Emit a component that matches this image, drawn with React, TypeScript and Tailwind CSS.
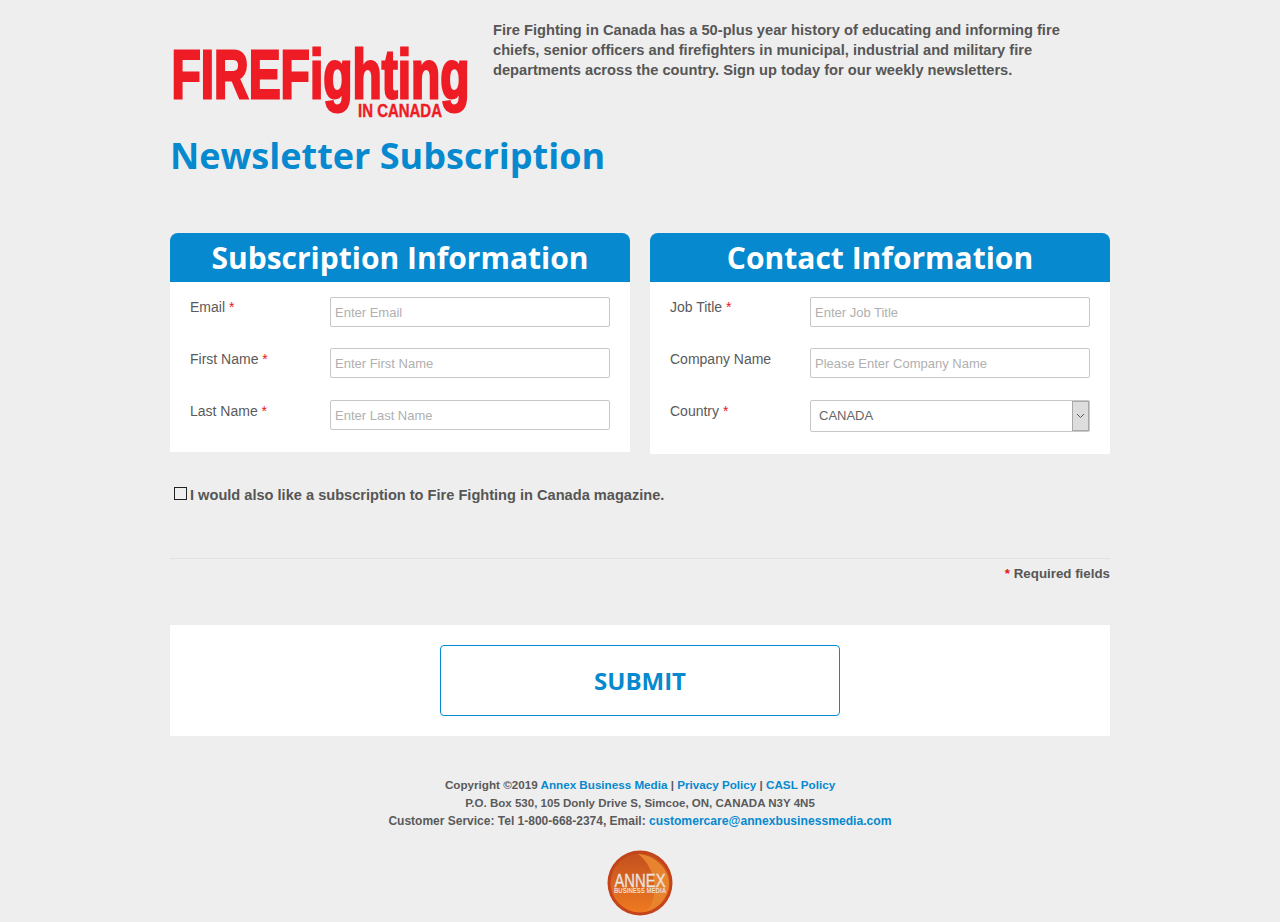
const sans = { fontFamily: '"Liberation Sans", Arial, sans-serif' }

interface FieldProps {
  label: string
  placeholder: string
  required?: boolean
  lowerLabel?: boolean
  className?: string
}

function Star() {
  return <span className="text-[#e8141c]"> *</span>
}

// label sits a little higher than the input, same as the original form
function Field({ label, placeholder, required, lowerLabel, className }: FieldProps) {
  return (
    <div className={`flex items-start ${className ?? ''}`}>
      <label className={`w-[140px] text-[14px] leading-[18px] text-[#5a5a5a] ${lowerLabel ? 'pt-[2px]' : 'pt-[1px]'}`}>
        {label}
        {required && <Star />}
      </label>
      <input
        placeholder={placeholder}
        className="h-[30px] w-[280px] rounded-[2px] border border-[#c8c8c8] bg-white px-[4px] text-[13px] text-[#555] outline-none placeholder:text-[#b0b0b0]"
      />
    </div>
  )
}

function PanelHeader({ title }: { title: string }) {
  return (
    <div
      className="h-[49px] rounded-t-[8px] bg-[#0689ce] text-center text-[30px] font-bold leading-[49px] text-white"
      style={{ fontFamily: '"Open Sans", sans-serif' }}
    >
      {title}
    </div>
  )
}

function FireLogo() {
  return (
    <svg width="300" height="76" viewBox="0 0 300 76" className="block overflow-visible">
      <text
        x="1.5"
        y="53"
        fontFamily="Liberation Sans"
        fontWeight="700"
        fontSize="69"
        fill="#ee1c25"
        stroke="#ee1c25"
        strokeWidth="2.8"
        textLength="298"
        lengthAdjust="spacingAndGlyphs"
      >
        FIREFighting
      </text>
      <text
        x="188"
        y="72"
        fontFamily="Liberation Sans"
        fontWeight="700"
        fontSize="18"
        fill="#ee1c25"
        stroke="#ee1c25"
        strokeWidth="0.4"
        textLength="84"
        lengthAdjust="spacingAndGlyphs"
      >
        IN CANADA
      </text>
    </svg>
  )
}

function AnnexLogo() {
  return (
    <svg width="66" height="66" viewBox="0 0 66 66" className="block overflow-visible">
      <defs>
        <linearGradient id="annexFill" x1="0" y1="0" x2="0" y2="1">
          <stop offset="0" stopColor="#c4501f" />
          <stop offset="1" stopColor="#ee7a20" />
        </linearGradient>
      </defs>
      <circle cx="33" cy="33" r="32.5" fill="#c4431b" />
      <circle cx="33" cy="33" r="29.5" fill="url(#annexFill)" />
      <path d="M31 4 C46 4 62 18 62 33 C62 46 52 58 40 61 C52 48 50 18 31 4 Z" fill="#e8842e" />
      <text x="33" y="36.7" textAnchor="middle" fontFamily="Liberation Sans" fontSize="18" fill="#e9e4e0" stroke="#e9e4e0" strokeWidth="0.3" textLength="51" lengthAdjust="spacingAndGlyphs">
        ANNEX
      </text>
      <text x="33" y="43" textAnchor="middle" fontFamily="Liberation Sans" fontWeight="700" fontSize="7" fill="#f2ddcc" textLength="52" lengthAdjust="spacingAndGlyphs">
        BUSINESS MEDIA
      </text>
    </svg>
  )
}

export default function App() {
  return (
    <div className="min-h-[922px] bg-[#eeeeee]" style={sans}>
      <div className="mx-auto w-[940px]">
        {/* Header */}
        <div className="flex pt-[20px]">
          <div className="w-[323px] pt-[25px]">
            <FireLogo />
          </div>
          <p className="w-[590px] text-[14.67px] font-bold leading-[20px] text-[#565656]">
            Fire Fighting in Canada has a 50-plus year history of educating and informing fire chiefs, senior officers and firefighters in municipal, industrial and military fire departments across the country. Sign up today for our weekly newsletters.
          </p>
        </div>

        <h1
          className="mt-[11px] text-[36px] font-bold leading-[48px] text-[#0689ce]"
          style={{ fontFamily: '"Open Sans", sans-serif' }}
        >
          Newsletter Subscription
        </h1>

        {/* Form panels */}
        <div className="mt-[53px] flex items-start gap-5">
          <div className="w-[460px]">
            <PanelHeader title="Subscription Information" />
            <div className="flex flex-col gap-[21px] bg-white px-5 pb-[22px] pt-[15px]">
              <Field label="Email" placeholder="Enter Email" required />
              <Field label="First Name" placeholder="Enter First Name" required lowerLabel />
              <Field label="Last Name" placeholder="Enter Last Name" required lowerLabel className="mt-[1px]" />
            </div>
          </div>
          <div className="w-[460px]">
            <PanelHeader title="Contact Information" />
            <div className="flex flex-col gap-[21px] bg-white px-5 pb-[22px] pt-[15px]">
              <Field label="Job Title" placeholder="Enter Job Title" required />
              <Field label="Company Name" placeholder="Please Enter Company Name" lowerLabel />
              <div className="mt-[1px] flex items-start">
                <label className="w-[140px] pt-[2px] text-[14px] leading-[18px] text-[#5a5a5a]">
                  Country
                  <Star />
                </label>
                <div className="relative h-[32px] w-[280px]">
                  <select className="h-full w-full appearance-none rounded-[2px] border border-[#c8c8c8] bg-white px-[8px] text-[13px] text-[#666] outline-none">
                    <option>CANADA</option>
                  </select>
                  <span className="absolute right-[1px] top-[1px] flex h-[30px] w-[17px] items-center justify-center border border-[#a8a8a8] bg-[#dddddd]">
                    <svg width="9" height="6" viewBox="0 0 9 6">
                      <path d="M1 1 L4.5 4.5 L8 1" fill="none" stroke="#555" strokeWidth="1" />
                    </svg>
                  </span>
                </div>
              </div>
            </div>
          </div>
        </div>

        {/* Magazine opt in */}
        <div className="mt-[31px] flex items-center pl-[4px] text-[14.6px] font-bold leading-[20px] text-[#565656]">
          <input type="checkbox" className="mb-[3px] h-[13px] w-[13px] appearance-none border border-[#222] bg-transparent" />
          <span className="ml-[3px]">I would also like a subscription to Fire Fighting in Canada magazine.</span>
        </div>

        <div className="mt-[53px] border-t border-[#e2e2e2] pt-[7px] text-right text-[13.33px] font-bold leading-[16px] text-[#565656]">
          <span className="text-[#e8141c]">*</span> Required fields
        </div>

        {/* Submit */}
        <div className="mt-[43px] flex justify-center bg-white py-5">
          <button
            className="h-[71px] w-[400px] rounded-[4px] border border-[#0689ce] bg-white text-[24px] font-bold text-[#0689ce]"
            style={{ fontFamily: '"Open Sans", sans-serif' }}
          >
            SUBMIT
          </button>
        </div>

        {/* Footer */}
        <div className="mt-[40px] text-center font-bold leading-[18px] text-[#5a5a5a]">
          <p className="text-[11.67px]">
            Copyright ©2019 <a className="text-[#0689ce]">Annex Business Media</a> | <a className="text-[#0689ce]">Privacy Policy</a> | <a className="text-[#0689ce]">CASL Policy</a>
          </p>
          <p className="text-[11.54px]">P.O. Box 530, 105 Donly Drive S, Simcoe, ON, CANADA N3Y 4N5</p>
          <p className="text-[12px]">
            Customer Service: Tel 1-800-668-2374, Email: <a className="text-[12.15px] text-[#0689ce]">customercare@annexbusinessmedia.com</a>
          </p>
        </div>
        <div className="mt-[20px] flex justify-center">
          <AnnexLogo />
        </div>
      </div>
    </div>
  )
}
